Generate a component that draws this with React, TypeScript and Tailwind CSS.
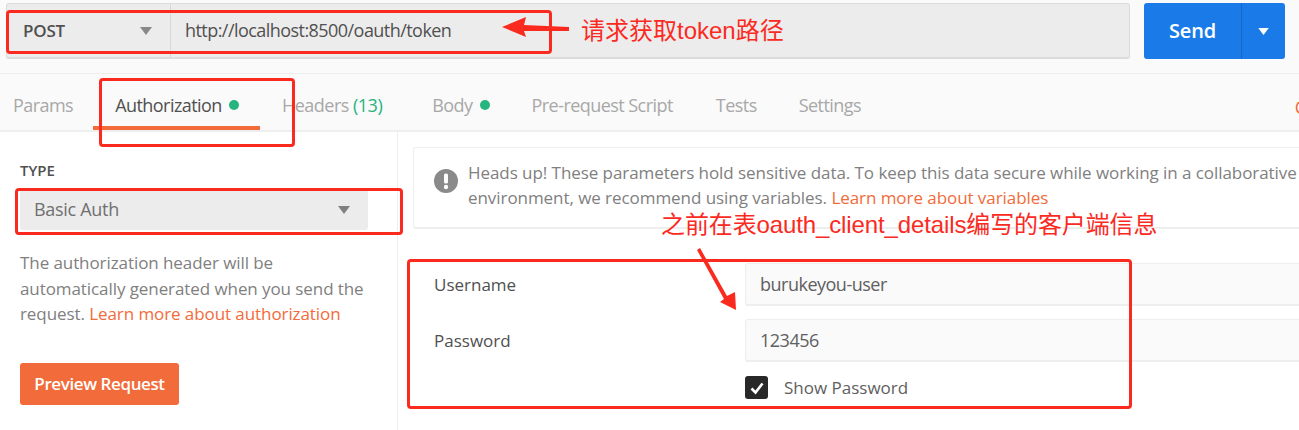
const FONT = "font-['Open_Sans',sans-serif]"
const CJK = "font-['Liberation_Sans','Noto_Sans_CJK_SC',sans-serif]"

function Caret({ className }: { className: string }) {
  return (
    <svg viewBox="0 0 12 8" className={className}>
      <path d="M0 0h12L6 8z" fill="currentColor" />
    </svg>
  )
}

function Dot() {
  return <span className="ml-[7px] inline-block h-[10px] w-[10px] rounded-full bg-[#26b47f]" />
}

function Tab({ label, className = '' }: { label: string; className?: string }) {
  return <span className={`text-[18px] leading-[24px] tracking-[-0.55px] text-[#a8a8a8] ${className}`}>{label}</span>
}

function UrlBar() {
  return (
    <div className="flex h-[73px] items-start bg-[#fafafa] pl-[6px] pt-[3px] pr-[14px]">
      <div className="flex h-[56px] flex-1 rounded-[3px] border border-[#dcdcdc] border-b-2 bg-[#ececec]">
        <div className="flex w-[164px] items-center justify-between border-r border-[#d8d8d8] pl-[16px] pr-[18px]">
          <span className="text-[17px] font-semibold tracking-[-0.2px] text-[#505050]">POST</span>
          <Caret className="h-[8px] w-[12px] text-[#888888]" />
        </div>
        <div className="flex items-center pl-[14px] text-[18px] tracking-[-0.55px] text-[#505050]">http://localhost:8500/oauth/token</div>
      </div>
      <div className="ml-[14px] flex h-[56px] w-[141px] rounded-[3px] bg-[#1a7be8] text-white">
        <div className="flex w-[98px] items-center justify-center border-r border-[#1668c8] text-[20px] font-semibold tracking-[-0.2px]">Send</div>
        <div className="flex flex-1 items-center justify-center">
          <Caret className="h-[7px] w-[11px] text-white" />
        </div>
      </div>
    </div>
  )
}

function TabRow() {
  return (
    <div className="flex h-[59px] items-center border-y border-[#eeeeee] border-b-2 bg-[#fafafa] pl-[13px] pt-[5px]">
      <Tab label="Params" />
      <div className="relative ml-[42px] flex items-center">
        <span className="text-[18px] leading-[24px] tracking-[-0.55px] text-[#505050]">Authorization</span>
        <Dot />
        <div className="absolute -left-[22px] -right-[21px] top-[33px] h-[4px] bg-[#f26b3a]" />
      </div>
      <span className="ml-[43px] text-[18px] leading-[24px] tracking-[-0.5px] text-[#a8a8a8]">
        Headers <span className="text-[#26b47f]">(13)</span>
      </span>
      <div className="ml-[50px] flex items-center">
        <Tab label="Body" />
        <Dot />
      </div>
      <Tab label="Pre-request Script" className="ml-[42px]" />
      <Tab label="Tests" className="ml-[43px]" />
      <Tab label="Settings" className="ml-[42px]" />
    </div>
  )
}

function LeftPanel() {
  return (
    <div className="flex h-[298px] w-[398px] shrink-0 flex-col border-r border-[#eeeeee] pl-[20px]">
      <div className="mt-[28px] text-[15px] font-semibold leading-[20px] text-[#505050]">TYPE</div>
      <div className="mt-[9px] flex h-[41px] w-[348px] items-center justify-between rounded-[3px] bg-[#ececec] pl-[14px] pr-[18px]">
        <span className="text-[18px] tracking-[-0.3px] text-[#707070]">Basic Auth</span>
        <Caret className="h-[8px] w-[12px] text-[#808080]" />
      </div>
      <p className="mt-[20px] w-[360px] text-[17px] leading-[25.5px] tracking-[-0.08px] text-[#808080]">
        The authorization header will be automatically generated when you send the request.{' '}
        <span className="text-[#f26b3a]">Learn more about authorization</span>
      </p>
      <button className="mt-[36px] h-[42px] w-[159px] rounded-[3px] bg-[#f26b3a] text-[17px] font-semibold tracking-[-0.4px] text-white">
        Preview Request
      </button>
    </div>
  )
}

function Field({ label, value }: { label: string; value: string }) {
  return (
    <div className="flex h-[43px] items-center">
      <span className="w-[331px] shrink-0 pl-[20px] text-[17px] text-[#505050]">{label}</span>
      <div className="flex h-[43px] flex-1 items-center rounded-l-[3px] border border-r-0 border-[#eeeeee] border-b-2 bg-[#fafafa] pl-[14px] text-[18px] tracking-[-0.5px] text-[#606060]">
        {value}
      </div>
    </div>
  )
}

function RightPanel() {
  return (
    <div className="min-w-0 flex-1 overflow-hidden pl-[15px] pt-[15px]">
      <div className="-mr-[40px] flex h-[82px] gap-[10px] rounded-l-[3px] border border-[#eeeeee] border-b-2 pl-[20px] pt-[12px]">
        <svg viewBox="0 0 24 24" className="mt-[9px] h-[24px] w-[24px] shrink-0">
          <circle cx="12" cy="12" r="12" fill="#8a8a8a" />
          <rect x="10" y="4.5" width="4" height="10" rx="1.5" fill="#fff" />
          <circle cx="12" cy="18" r="2.2" fill="#fff" />
        </svg>
        <p className="w-[838px] text-[17px] leading-[25px] tracking-[-0.06px] text-[#808080]">
          Heads up! These parameters hold sensitive data. To keep this data secure while working in a collaborative environment, we recommend using variables.{' '}
          <span className="text-[#f26b3a]">Learn more about variables</span>
        </p>
      </div>
      <div className="mt-[34px] flex flex-col gap-[13px] pl-[1px]">
        <Field label="Username" value="burukeyou-user" />
        <Field label="Password" value="123456" />
      </div>
      <div className="mt-[13px] flex items-center pl-[332px]">
        <span className="flex h-[23px] w-[23px] items-center justify-center rounded-[3px] bg-[#282828]">
          <svg viewBox="0 0 16 16" className="h-[16px] w-[16px]">
            <path d="M2.5 8.5 6.5 12.5 13.5 3.5" fill="none" stroke="#fff" strokeWidth="2.6" />
          </svg>
        </span>
        <span className="ml-[16px] text-[17px] text-[#606060]">Show Password</span>
      </div>
    </div>
  )
}

// the red markup drawn over the screenshot
function Annotations() {
  const box = 'absolute rounded-[4px] border-[3px] border-[#fb2a1f]'
  return (
    <div className="pointer-events-none absolute inset-0 overflow-hidden">
      <div className={`${box} left-[6px] top-[10px] h-[44px] w-[546px]`} />
      <div className={`${box} left-[99px] top-[78px] h-[69px] w-[196px]`} />
      <div className={`${box} left-[15px] top-[188px] h-[47px] w-[388px]`} />
      <div className={`${box} left-[407px] top-[259px] h-[150px] w-[725px]`} />
      <div className={`absolute left-[581px] top-[17px] text-[24px] leading-[28px] text-[#fb2a1f] ${CJK}`}>请求获取token路径</div>
      <div className={`absolute left-[661px] top-[212px] text-[24px] leading-[26px] tracking-[-0.12px] text-[#fb2a1f] ${CJK}`}>之前在表oauth_client_details编写的客户端信息</div>
      <svg viewBox="0 0 1299 430" className="absolute inset-0 h-[430px] w-[1299px]">
        <path d="M502 27 526 17 524 25 569 27 569 31 524 31 526 37z" fill="#fb2a1f" />
        <path d="M697 250 700 248 727 296 735 292 736 310 720 302 724 299z" fill="#fb2a1f" />
      </svg>
      <span className="absolute -right-[7px] top-[94px] text-[18px] text-[#f26b3a]">C</span>
    </div>
  )
}

export default function App() {
  return (
    <div className={`relative h-[430px] w-[1299px] overflow-hidden bg-white ${FONT}`}>
      <UrlBar />
      <TabRow />
      <div className="flex">
        <LeftPanel />
        <RightPanel />
      </div>
      <Annotations />
    </div>
  )
}
